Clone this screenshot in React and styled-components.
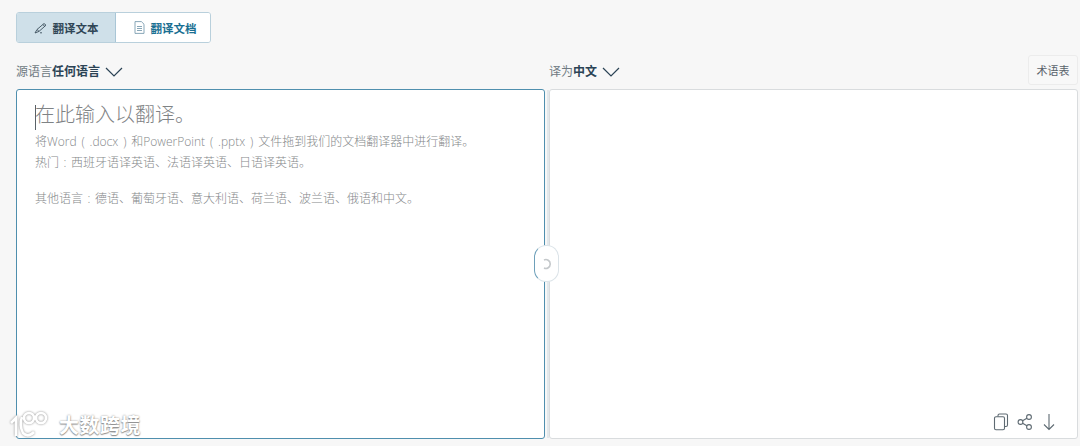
import React from 'react';
import styled, { createGlobalStyle } from 'styled-components';

const GlobalStyle = createGlobalStyle`
  html, body {
    margin: 0;
    padding: 0;
    background: #f7f7f7;
    font-family: "Open Sans", "Noto Sans CJK SC", sans-serif;
  }
`;

const Page = styled.div`
  position: relative;
  width: 1080px;
  height: 446px;
  overflow: hidden;
  box-sizing: border-box;
  padding: 12px 2px 0 16px;
  background: #f7f7f7;
`;

// 顶部切换
const Tabs = styled.div`
  display: flex;
  width: 195px;
  height: 31px;
  box-sizing: border-box;
  border: 1px solid #b9d0dc;
  border-radius: 3px;
  overflow: hidden;
`;

const Tab = styled.div`
  display: flex;
  align-items: center;
  justify-content: center;
  gap: ${p => (p.$active ? '5px' : '6px')};
  width: ${p => (p.$active ? '99px' : '94px')};
  padding-left: ${p => (p.$active ? '0' : '4px')};
  box-sizing: border-box;
  font-size: 11.5px;
  font-weight: 700;
  color: ${p => (p.$active ? '#2f4656' : '#1a6f92')};
  background: ${p => (p.$active ? '#cfe0e9' : '#fff')};
  border-right: ${p => (p.$active ? '1px solid #a9c6d6' : 'none')};
`;

const LabelRow = styled.div`
  display: flex;
  height: 46px;
`;

const LabelCell = styled.div`
  display: flex;
  align-items: flex-end;
  width: ${p => p.$width};
  box-sizing: border-box;
  font-size: 12px;
  line-height: 17px;
  padding-bottom: 9px;
  color: #6f7a82;
`;

const LabelStrong = styled.span`
  font-weight: 700;
  color: #2b4355;
`;

const Chevron = styled.svg`
  width: 18px;
  height: 10px;
  margin: 0 0 3px 5px;
  fill: none;
  stroke: #2b4355;
  stroke-width: 1.2;
`;

const GlossaryButton = styled.div`
  position: absolute;
  top: 55px;
  right: 2px;
  width: 50px;
  height: 30px;
  box-sizing: border-box;
  display: flex;
  align-items: center;
  justify-content: center;
  font-size: 11px;
  color: #5a646c;
  background: #f8f8f8;
  border: 1px solid #ececec;
  border-radius: 3px;
`;

const Panels = styled.div`
  display: flex;
  gap: 4px;
  height: 350px;
`;

const SourcePanel = styled.div`
  position: relative;
  width: 529px;
  box-sizing: border-box;
  padding: 12px 18px;
  background: #fff;
  border: 1px solid #4f8fae;
  border-radius: 3px;
`;

const TargetPanel = styled.div`
  position: relative;
  width: 529px;
  box-sizing: border-box;
  background: #fff;
  border: 1px solid #d9dcde;
  border-radius: 3px;
`;

const Placeholder = styled.div`
  position: relative;
  font-size: 20px;
  font-weight: 300;
  line-height: 26px;
  margin-bottom: 3px;
  color: #7f8385;
`;

const Caret = styled.span`
  position: absolute;
  left: 0;
  top: 3px;
  width: 1px;
  height: 25px;
  background: #5a6268;
`;

const Hint = styled.p`
  margin: ${p => p.$gap || '0'} 0 0;
  font-size: 12px;
  font-weight: 300;
  line-height: 21px;
  word-spacing: 1.75px;
  color: #85888a;
`;

const Colon = styled.span`
  display: inline-block;
  width: 12px;
  text-align: center;
`;

const Splitter = styled.div`
  position: absolute;
  left: 534px;
  top: 245px;
  width: 25px;
  height: 37px;
  box-sizing: border-box;
  display: flex;
  align-items: center;
  justify-content: center;
  background: #fff;
  border: 1px solid #dbe3e8;
  border-left-color: #6ea0ba;
  border-radius: 12px;
`;

const Divider = styled.div`
  position: absolute;
  left: 547px;
  top: 90px;
  width: 2px;
  height: 348px;
  background: #e3e8eb;
`;

const Actions = styled.div`
  position: absolute;
  right: 20px;
  bottom: 7px;
  display: flex;
  align-items: center;
  gap: 8px;
`;

const ActionIcon = styled.svg`
  width: 16px;
  height: 18px;
  fill: none;
  stroke: #5e6a72;
  stroke-width: 1.1;
`;

const Watermark = styled.div`
  position: absolute;
  left: 8px;
  bottom: 5px;
  display: flex;
  align-items: center;
  gap: 5px;
`;

const WatermarkText = styled.span`
  font-family: "Noto Sans CJK SC", sans-serif;
  font-size: 20px;
  line-height: 26px;
  font-weight: 700;
  letter-spacing: 0.5px;
  color: #fff;
  text-shadow: 0 0 2px #8f8f8f, 0 1px 1px #8f8f8f;
`;

const WatermarkLogo = styled.svg`
  width: 46px;
  height: 32px;
  fill: none;
  stroke: #fff;
  stroke-width: 2.6;
  filter: drop-shadow(0 0 1px #8f8f8f);
`;

function App() {
  return (
    <Page>
      <GlobalStyle />

      <Tabs>
        <Tab $active>
          <svg width="14" height="12" viewBox="0 0 14 12" fill="none" stroke="#3c4f5c" strokeWidth="0.9">
            <path d="M1 11 L3 7.5 L10 1.5 L12 3.2 L5 9.4 Z M3 7.5 L5 9.4 M8.8 2.6 L10.8 4.3 M6 10.8 H8" />
          </svg>
          翻译文本
        </Tab>
        <Tab>
          <svg width="11" height="13" viewBox="0 0 11 13" fill="none" stroke="#7c9db0" strokeWidth="0.9">
            <path d="M1 .6 H7.4 L10 3.2 V12.4 H1 Z M3 5.5 H8 M3 7.5 H8 M3 9.5 H8" />
          </svg>
          翻译文档
        </Tab>
      </Tabs>

      <LabelRow>
        <LabelCell $width="533px">
          源语言<LabelStrong>任何语言</LabelStrong>
          <Chevron viewBox="0 0 18 10"><path d="M1 1 L9 9 L17 1" /></Chevron>
        </LabelCell>
        <LabelCell $width="300px">
          译为<LabelStrong>中文</LabelStrong>
          <Chevron viewBox="0 0 18 10"><path d="M1 1 L9 9 L17 1" /></Chevron>
        </LabelCell>
      </LabelRow>

      <GlossaryButton>术语表</GlossaryButton>

      <Panels>
        <SourcePanel>
          <Placeholder>
            <Caret />
            在此输入以翻译。
          </Placeholder>
          <Hint>将Word ( .docx ) 和PowerPoint ( .pptx ) 文件拖到我们的文档翻译器中进行翻译。</Hint>
          <Hint>热门<Colon>:</Colon>西班牙语译英语、法语译英语、日语译英语。</Hint>
          <Hint $gap="15px">其他语言<Colon>:</Colon>德语、葡萄牙语、意大利语、荷兰语、波兰语、俄语和中文。</Hint>
        </SourcePanel>
        <TargetPanel>
          <Actions>
            <ActionIcon viewBox="0 0 16 18">
              <path d="M5 3.5 V2.5 Q5 1 6.5 1 H13 Q14.5 1 14.5 2.5 V12 Q14.5 13.5 13 13.5 H11.5" />
              <rect x="1.5" y="3.8" width="10" height="13" rx="1.5" />
            </ActionIcon>
            <ActionIcon viewBox="0 0 16 18">
              <circle cx="3.5" cy="9" r="2.4" />
              <circle cx="12" cy="4" r="2.4" />
              <circle cx="12" cy="14" r="2.4" />
              <path d="M5.6 7.8 L9.9 5.2 M5.6 10.2 L9.9 12.8" />
            </ActionIcon>
            <ActionIcon viewBox="0 0 16 18">
              <path d="M8 1 V16.5 M3 11.5 L8 16.5 L13 11.5" />
            </ActionIcon>
          </Actions>
        </TargetPanel>
      </Panels>

      <Divider />

      <Splitter>
        <svg width="12" height="12" viewBox="0 0 12 12" fill="none" stroke="#c4c8cb" strokeWidth="1.6">
          <path d="M3 2 A4.4 4.4 0 1 1 3 10" />
        </svg>
      </Splitter>

      <Watermark>
        <WatermarkLogo viewBox="0 0 46 32">
          <path d="M3 14 L8 9 V27 M14 8 Q11 16 15 24 Q20 29 26 23" />
          <circle cx="21" cy="9" r="5" />
          <circle cx="33" cy="9" r="5" />
        </WatermarkLogo>
        <WatermarkText>大数跨境</WatermarkText>
      </Watermark>
    </Page>
  );
}

export default App;
